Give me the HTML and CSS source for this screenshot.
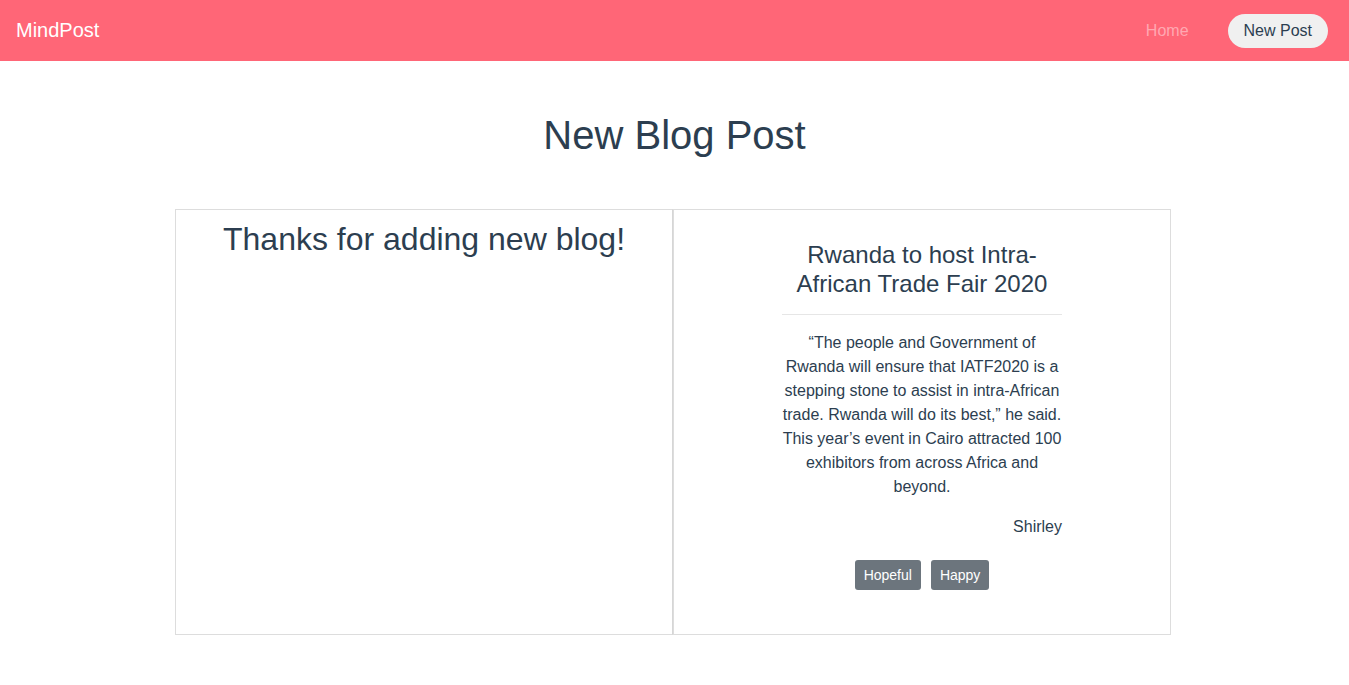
FILE: index.html
```html
<!DOCTYPE html>
<html lang="en">
<head>
<meta charset="utf-8">
<title>MindPost</title>
<link rel="stylesheet" href="styles.css">
</head>
<body>
<nav class="navbar">
  <a class="brand" href="#">MindPost</a>
  <div class="nav-links">
    <a class="nav-link" href="#">Home</a>
    <a class="nav-pill" href="#">New Post</a>
  </div>
</nav>
<main class="page">
  <h1 class="page-title">New Blog Post</h1>
  <div class="board">
    <div class="panels">
      <section class="panel panel-left">
        <h2 class="thanks">Thanks for adding new blog!</h2>
      </section>
      <section class="panel panel-right">
        <article class="post">
          <h4 class="post-title">Rwanda to host Intra-African Trade Fair 2020</h4>
          <hr class="post-rule">
          <p class="post-body">“The people and Government of Rwanda will ensure that IATF2020 is a stepping stone to assist in intra-African trade. Rwanda will do its best,” he said. This year’s event in Cairo attracted 100 exhibitors from across Africa and beyond.</p>
          <p class="post-author">Shirley</p>
          <div class="tags">
            <span class="tag">Hopeful</span>
            <span class="tag">Happy</span>
          </div>
        </article>
      </section>
    </div>
  </div>
</main>
</body>
</html>
```

FILE: styles.css
```css
* { box-sizing: border-box; }
html, body { margin: 0; padding: 0; }
body {
  font-family: "Liberation Sans", Arial, sans-serif;
  color: #2c3e50;
  background: #fff;
}
.navbar {
  height: 61px;
  background: #ff6677;
  display: flex;
  align-items: center;
  justify-content: space-between;
  padding: 0 21px 0 16px;
}
.brand {
  color: #fff;
  font-size: 20px;
  text-decoration: none;
}
.nav-links {
  display: flex;
  align-items: center;
  gap: 39px;
}
.nav-link {
  color: #ffa8b2;
  font-size: 16px;
  text-decoration: none;
}
.nav-pill {
  display: flex;
  align-items: center;
  height: 34px;
  padding: 0 16px;
  border-radius: 17px;
  background: #f0f0f0;
  color: #2c3e50;
  font-size: 16px;
  text-decoration: none;
}
.page-title {
  margin: 50px 0 50px;
  text-align: center;
  font-size: 40px;
  font-weight: 400;
  line-height: 48px;
}
.board {
  padding-right: 3px;
}
.panels {
  width: 996px;
  margin: 0 auto;
  display: flex;
}
.panel {
  flex: 1 1 0;
  border: 1px solid #dddddd;
  height: 426px;
}
.panel-left { border-right-color: #d6d6d6; }
.thanks {
  margin: 10px 0 0;
  text-align: center;
  font-size: 32px;
  font-weight: 400;
  line-height: 38px;
}
.post {
  width: 280px;
  margin: 30px auto 0;
  text-align: center;
}
.post-title {
  margin: 0;
  font-size: 24px;
  font-weight: 400;
  line-height: 29px;
}
.post-rule {
  margin: 16px 0;
  border: 0;
  border-top: 1px solid #e6e6e6;
}
.post-body {
  margin: 0 0 16px;
  font-size: 16px;
  line-height: 24px;
}
.post-author {
  margin: 0;
  text-align: right;
  font-size: 16px;
  line-height: 24px;
}
.tags {
  margin-top: 21px;
  display: flex;
  justify-content: center;
  gap: 10px;
}
.tag {
  display: flex;
  align-items: center;
  height: 30px;
  padding: 0 9px;
  border-radius: 3px;
  background: #6c757d;
  color: #fff;
  font-size: 14px;
}
```
